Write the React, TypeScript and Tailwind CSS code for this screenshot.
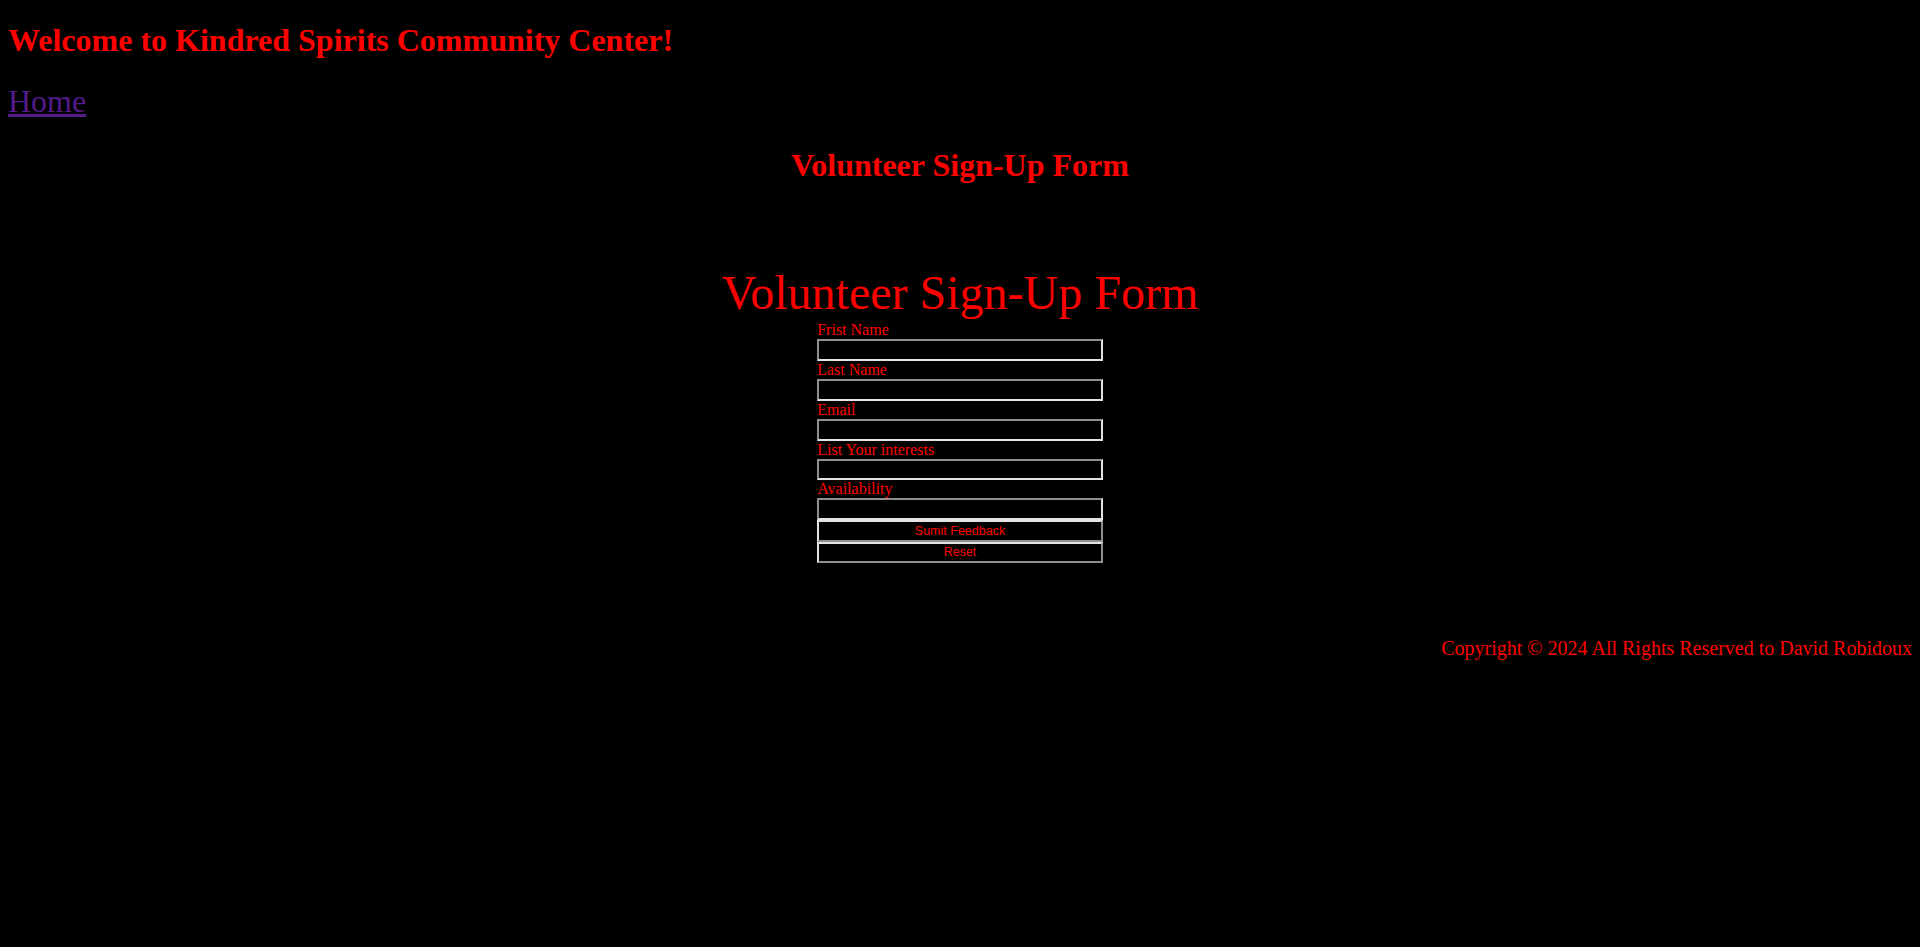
import React from "react";

const fields = ["Frist Name", "Last Name", "Email", "List Your interests", "Availability"];

const App: React.FC = () => {
  return (
    <div className="min-h-screen bg-black px-2 pt-[21.5px] pb-2 font-['Liberation_Serif','Times_New_Roman',serif] leading-[normal] text-[#ff0000]">
      <h1 className="text-[32px] font-bold">Welcome to Kindred Spirits Community Center!</h1>
      <nav className="mt-[24.2px] text-[32px]">
        <a href="#" className="text-[#551a8b] underline">
          Home
        </a>
      </nav>
      <h1 className="mt-[27.5px] text-center text-[32px] font-bold">Volunteer Sign-Up Form</h1>

      <form className="mt-[81.2px]" onSubmit={(e) => e.preventDefault()}>
        <p className="text-center text-[48px]">Volunteer Sign-Up Form</p>
        <div className="mx-auto mt-[0.8px] w-[15%] text-[16px]">
          {fields.map((label) => (
            <div key={label}>
              <label className="block">{label}</label>
              <input
                type="text"
                className="block h-[21.8px] w-full border-2 border-t-[#8f8f8f] border-r-[#e3e3e3] border-b-[#e3e3e3] border-l-[#8f8f8f] bg-black px-[2px] font-['Liberation_Sans',Arial,sans-serif] text-[13.33px] text-white outline-none"
              />
            </div>
          ))}
          <button
            type="submit"
            className="block h-[21.6px] w-full border-2 border-t-[#e3e3e3] border-r-[#8f8f8f] border-b-[#8f8f8f] border-l-[#e3e3e3] bg-black font-['Liberation_Sans',Arial,sans-serif] text-[12.5px] leading-none text-[#ff0000]"
          >
            Sumit Feedback
          </button>
          <button
            type="reset"
            className="block h-[21.6px] w-full border-2 border-t-[#e3e3e3] border-r-[#8f8f8f] border-b-[#8f8f8f] border-l-[#e3e3e3] bg-black font-['Liberation_Sans',Arial,sans-serif] text-[12.5px] leading-none text-[#ff0000]"
          >
            Reset
          </button>
        </div>
      </form>

      <footer className="mt-[73.6px] text-right text-[20px]">
        Copyright © 2024 All Rights Reserved to David Robidoux
      </footer>
    </div>
  );
};

export default App;
